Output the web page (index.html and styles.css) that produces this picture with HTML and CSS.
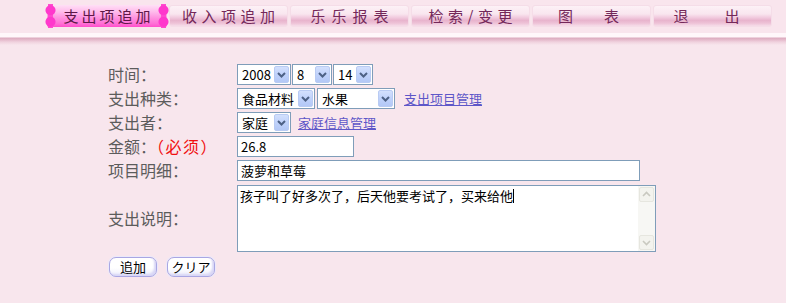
FILE: index.html
```html
<!DOCTYPE html>
<html lang="zh">
<head>
<meta charset="utf-8">
<title>支出项追加</title>
<link rel="stylesheet" href="styles.css">
</head>
<body>
<header class="header">
  <nav class="tabs">
    <a class="tab active"><span class="t t-active">支出项追加</span></a>
    <a class="tab"><span class="t">收入项追加</span></a>
    <a class="tab"><span class="t t-wide">乐乐报表</span></a>
    <a class="tab"><span class="t">检索/变更</span></a>
    <a class="tab"><span class="t t-two">图表</span></a>
    <a class="tab"><span class="t t-two2">退出</span></a>
  </nav>
</header>
<div class="band"></div>

<form class="form">
  <label class="lbl">时间：</label>
  <div class="ctl">
    <span class="sel w-year"><span class="val">2008</span><span class="btn"><svg viewBox="0 0 15 17" width="15" height="17"><path d="M4 7 L7.5 10.5 L11 7" fill="none" stroke="#4d6185" stroke-width="2"/></svg></span></span>
    <span class="sel w-small"><span class="val">8</span><span class="btn"><svg viewBox="0 0 15 17" width="15" height="17"><path d="M4 7 L7.5 10.5 L11 7" fill="none" stroke="#4d6185" stroke-width="2"/></svg></span></span>
    <span class="sel w-small"><span class="val">14</span><span class="btn"><svg viewBox="0 0 15 17" width="15" height="17"><path d="M4 7 L7.5 10.5 L11 7" fill="none" stroke="#4d6185" stroke-width="2"/></svg></span></span>
  </div>

  <label class="lbl">支出种类：</label>
  <div class="ctl">
    <span class="sel w-cat"><span class="val">食品材料</span><span class="btn"><svg viewBox="0 0 15 17" width="15" height="17"><path d="M4 7 L7.5 10.5 L11 7" fill="none" stroke="#4d6185" stroke-width="2"/></svg></span></span>
    <span class="sel w-cat2"><span class="val">水果</span><span class="btn"><svg viewBox="0 0 15 17" width="15" height="17"><path d="M4 7 L7.5 10.5 L11 7" fill="none" stroke="#4d6185" stroke-width="2"/></svg></span></span>
    <a class="link link-cat" href="#">支出项目管理</a>
  </div>

  <label class="lbl">支出者：</label>
  <div class="ctl">
    <span class="sel w-year"><span class="val">家庭</span><span class="btn"><svg viewBox="0 0 15 17" width="15" height="17"><path d="M4 7 L7.5 10.5 L11 7" fill="none" stroke="#4d6185" stroke-width="2"/></svg></span></span>
    <a class="link link-fam" href="#">家庭信息管理</a>
  </div>

  <label class="lbl">金额：<span class="req">（必须）</span></label>
  <div class="ctl">
    <input class="txt w-amount" type="text" value="26.8">
  </div>

  <label class="lbl">项目明细：</label>
  <div class="ctl">
    <input class="txt w-detail" type="text" value="菠萝和草莓">
  </div>

  <label class="lbl">支出说明：</label>
  <div class="ctl ctl-area">
    <div class="area">
      <div class="area-text">孩子叫了好多次了，后天他要考试了，买来给他<span class="caret"></span></div>
      <div class="scroll">
        <span class="sbtn"><svg viewBox="0 0 15 15" width="15" height="15"><path d="M4 9 L7.5 5.5 L11 9" fill="none" stroke="#c9c9c0" stroke-width="1.6"/></svg></span>
        <span class="strack"></span>
        <span class="sbtn"><svg viewBox="0 0 15 15" width="15" height="15"><path d="M4 6 L7.5 9.5 L11 6" fill="none" stroke="#c9c9c0" stroke-width="1.6"/></svg></span>
      </div>
    </div>
  </div>

  <div class="actions">
    <button class="pbtn" type="button">追加</button>
    <button class="pbtn" type="button">クリア</button>
  </div>
</form>
</body>
</html>
```

FILE: styles.css
```css
* { box-sizing: border-box; }

html, body {
  margin: 0;
  padding: 0;
  background: #f8e6ed;
  font-family: "Noto Sans CJK SC", "Noto Sans", sans-serif;
}

.header {
  height: 33px;
  padding: 5px 0 0 47px;
  background: #f9e5ed;
}

.tabs {
  display: flex;
  gap: 2px;
}

.tab {
  position: relative;
  width: 119px;
  height: 22px;
  display: flex;
  align-items: center;
  justify-content: center;
  border-radius: 3px;
  border: 1px solid #f5dde8;
  background: linear-gradient(to bottom,
    #fdf1f6 0%, #f9e6ef 40%, #f1cade 58%, #e8b4cd 72%, #eec2d7 86%, #f6dde9 100%);
  text-decoration: none;
}

.tab.active {
  width: 120px;
  border: none;
  border-radius: 2px;
  background: linear-gradient(to bottom,
    #ffe0f6 0%, #ffbcec 30%, #ff92e0 58%, #ff6ed6 85%, #ff4fcb 100%);
}

.tab.active::before,
.tab.active::after {
  content: "";
  position: absolute;
  top: -1px;
  width: 11px;
  height: 24px;
  background:
    radial-gradient(circle at 50% 26%, #ff38cc 0, #ff38cc 4.5px, transparent 5.5px),
    radial-gradient(circle at 50% 74%, #ff38cc 0, #ff38cc 4.5px, transparent 5.5px),
    linear-gradient(#ff4ccf, #ff4ccf) center / 5px 100% no-repeat;
}
.tab.active::before { left: -2px; }
.tab.active::after { right: -2px; }

.t {
  position: relative;
  z-index: 1;
  font-size: 15px;
  line-height: 20px;
  color: #74285a;
  letter-spacing: 4.5px;
  padding-left: 4.5px;
  white-space: nowrap;
}
.t-active { letter-spacing: 3px; padding-left: 3px; color: #5e1848; }
.t-wide { letter-spacing: 6px; padding-left: 6px; }
.t-two { letter-spacing: 31px; padding-left: 0; margin-right: -25px; }
.t-two2 { letter-spacing: 36px; padding-left: 0; margin-right: -24px; }

.band {
  height: 12px;
  background: linear-gradient(to bottom,
    #fff7fa 0px, #fff7fa 4px, #dcabbf 5px, #e6bccd 7px, #f0d2de 9px, #f8e6ed 12px);
}

.form {
  display: grid;
  grid-template-columns: 129px auto;
  grid-template-rows: 21px 21px 21px 21px 21px 68px auto;
  row-gap: 3px;
  align-items: center;
  margin: 19px 0 0 108px;
}

.lbl {
  font-size: 16px;
  line-height: 21px;
  color: #5c5c5c;
  white-space: nowrap;
}

.req { color: #f01010; letter-spacing: 1.5px; }

.ctl {
  display: flex;
  align-items: center;
  height: 21px;
}
.ctl-area { height: 68px; align-items: flex-end; }

.sel {
  display: flex;
  align-items: center;
  justify-content: space-between;
  height: 21px;
  border: 1px solid #7f9db9;
  background: #fff;
  padding: 1px;
  margin-right: 1px;
}

.val {
  font-size: 13px;
  line-height: 17px;
  color: #000;
  padding-left: 3px;
  white-space: nowrap;
}

.btn {
  display: flex;
  width: 15px;
  height: 17px;
  border-radius: 2px;
  border: 1px solid #b9cbf3;
  background: linear-gradient(to bottom, #d3e0fd 0%, #c0d2fb 50%, #b3c8f6 100%);
}
.btn svg { margin: -1px; }

.w-year { width: 54px; }
.w-small { width: 40px; }
.w-cat { width: 78px; margin-right: 2px; }
.w-cat2 { width: 78px; }

.link {
  font-size: 13px;
  color: #5e57c8;
  text-decoration: underline;
  white-space: nowrap;
}
.link-cat { margin-left: 8px; }
.link-fam { margin-left: 6px; }

.txt {
  height: 21px;
  border: 1px solid #7f9db9;
  background: #fff;
  font-family: "Noto Sans CJK SC", sans-serif;
  font-size: 13px;
  color: #000;
  padding: 0 3px;
  margin: 0;
  outline: none;
}
.w-amount { width: 117px; }
.w-detail { width: 403px; }

.area {
  display: flex;
  width: 419px;
  height: 67px;
  border: 1px solid #7f9db9;
  background: #fff;
}

.area-text {
  flex: 1;
  font-size: 13px;
  line-height: 17px;
  padding: 1px 2px;
  color: #000;
}

.caret {
  display: inline-block;
  width: 1px;
  height: 14px;
  background: #000;
  vertical-align: -2px;
}

.scroll {
  display: flex;
  flex-direction: column;
  width: 17px;
  background: #f7f7f4;
  padding: 1px;
}
.sbtn {
  display: flex;
  width: 15px;
  height: 15px;
  border: 1px solid #e6e6df;
  border-radius: 2px;
  background: #f3f3ee;
}
.sbtn svg { margin: -1px; }
.strack { flex: 1; }

.actions {
  grid-column: 1 / -1;
  display: flex;
  gap: 10px;
  padding-left: 1px;
  margin-top: 2px;
}

.pbtn {
  width: 48px;
  height: 20px;
  padding: 0;
  border: 1px solid #a9a6e3;
  border-radius: 7px;
  background: linear-gradient(to bottom, #ffffff 0%, #ffffff 55%, #ececfb 100%);
  box-shadow: inset -2px -2px 2px #d9d7f6, 0 0 0 1px #ebe9fa;
  font-family: "Noto Sans CJK JP", "Noto Sans CJK SC", sans-serif;
  font-size: 13px;
  line-height: 18px;
  color: #000;
}
```
